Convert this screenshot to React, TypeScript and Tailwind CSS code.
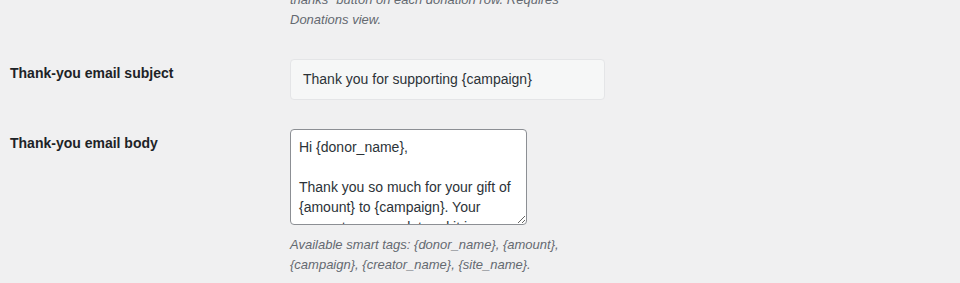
const body = `Hi {donor_name},

Thank you so much for your gift of {amount} to {campaign}. Your support means a lot and it is already making a difference.

With gratitude,
{creator_name}`;

function Row({
  label,
  labelClass,
  children,
  className,
}: {
  label?: string;
  labelClass?: string;
  children: React.ReactNode;
  className?: string;
}) {
  return (
    <div className={`flex ${className ?? ""}`}>
      <div className={`w-[280px] shrink-0 text-[14px] font-semibold leading-5 text-[#1d2327] ${labelClass ?? ""}`}>
        {label}
      </div>
      <div className="min-w-0 flex-1">{children}</div>
    </div>
  );
}

export default function App() {
  return (
    <div className="h-[283px] overflow-hidden bg-[#f0f0f1] pl-[10px] font-['Liberation_Sans',Arial,sans-serif]">
      <Row className="-mt-[10px]">
        <p className="whitespace-nowrap text-[13px] italic leading-5 text-[#646970]">
          thanks” button on each donation row. Requires
          <br />
          Donations view.
        </p>
      </Row>

      <Row label="Thank-you email subject" labelClass="pt-[4px]" className="pt-[29px]">
        <div className="flex h-[41px] w-[315px] items-center rounded-[4px] border border-[#e4e5e7] bg-[#f6f7f7] px-[12px] text-[14px] text-[#2c3338]">
          Thank you for supporting {"{campaign}"}
        </div>
      </Row>

      <Row label="Thank-you email body" labelClass="pt-[4px]" className="pt-[29px]">
        <textarea
          readOnly
          defaultValue={body}
          className="block h-[96px] w-[237px] overflow-hidden rounded-[4px] border border-[#8c8f94] bg-white px-[8px] py-[7px] text-[14px] leading-5 text-[#2c3338] outline-none"
        />
        <p className="mt-[10px] whitespace-nowrap text-[13px] italic leading-5 text-[#646970]">
          Available smart tags: {"{donor_name}"}, {"{amount}"},
          <br />
          {"{campaign}"}, {"{creator_name}"}, {"{site_name}"}.
        </p>
      </Row>
    </div>
  );
}
